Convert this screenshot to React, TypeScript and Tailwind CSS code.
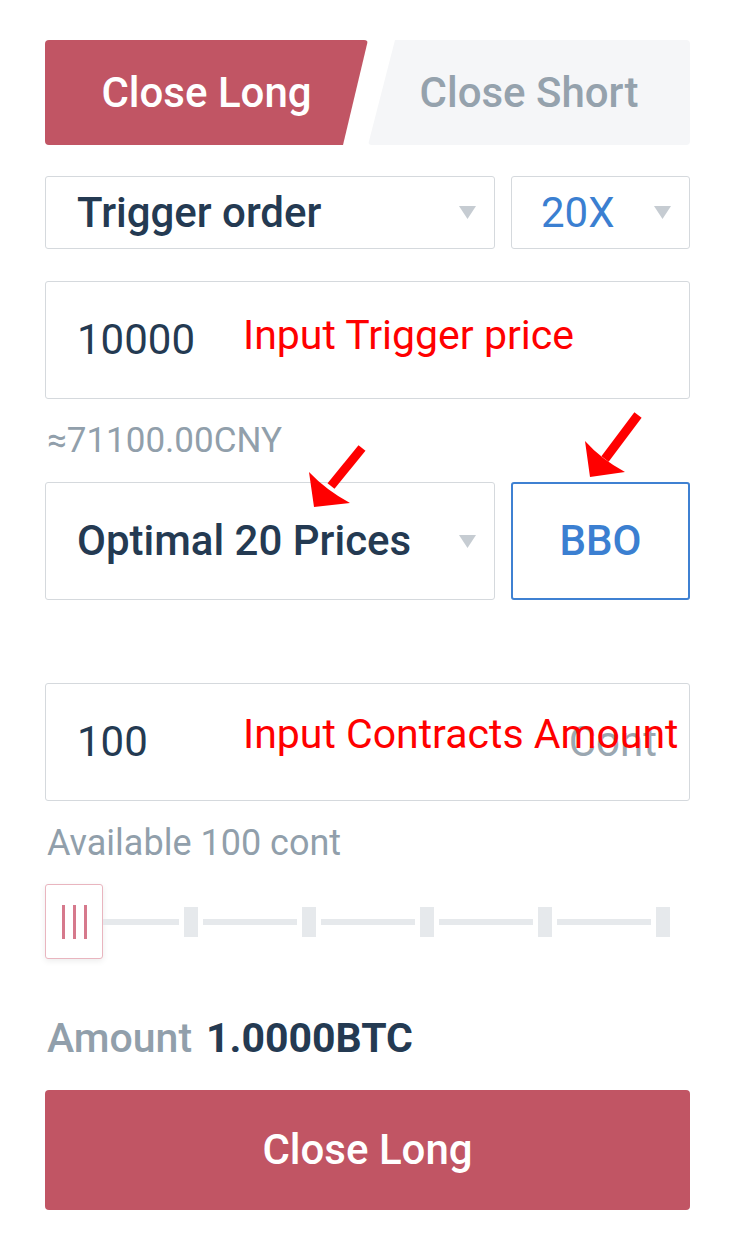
import React from 'react'

const navy = 'text-[#243a52]'

function Caret() {
  return (
    <svg width="17" height="13" viewBox="0 0 17 13" className="shrink-0">
      <polygon points="0,0 17,0 8.5,13" fill="#c6ccd2" />
    </svg>
  )
}

function SliderMark() {
  return <div className="h-[30px] w-[14px] bg-[#e6e9ec]" />
}

function SliderLine({ w }: { w: string }) {
  return <div className={`h-[6px] bg-[#e6e9ec] ${w}`} />
}

export default function App() {
  return (
    <div className="relative min-h-[1253px] w-[733px] bg-white pt-[40px] pr-[43px] pl-[45px] font-['Roboto','Liberation_Sans',sans-serif]">
      {/* tabs */}
      <div className="flex h-[105px]">
        <div className="flex w-[323px] items-center justify-center rounded-[4px] bg-[#c15564] [clip-path:polygon(0_0,100%_0,298px_100%,0_100%)]">
          <span className="text-[42px] leading-[42px] font-medium text-white">Close Long</span>
        </div>
        <div className="flex flex-1 items-center justify-center rounded-[4px] bg-[#f5f6f8] [clip-path:polygon(27px_0,100%_0,100%_100%,0_100%)]">
          <span className="text-[42px] leading-[42px] font-medium text-[#95a2ad]">Close Short</span>
        </div>
      </div>

      {/* order type + leverage */}
      <div className="mt-[31px] flex h-[73px] gap-4">
        <div className="flex w-[450px] items-center justify-between rounded-[3px] border border-[#d5d9dd] pr-[18px] pl-[31px]">
          <span className={`text-[42px] leading-[42px] font-medium ${navy}`}>Trigger order</span>
          <Caret />
        </div>
        <div className="flex flex-1 items-center justify-between rounded-[3px] border border-[#d5d9dd] pr-[18px] pl-[29px]">
          <span className="text-[42px] leading-[42px] text-[#3b7fd1]">20X</span>
          <Caret />
        </div>
      </div>

      {/* trigger price */}
      <div className="relative mt-[32px] flex h-[118px] items-center rounded-[3px] border border-[#d5d9dd] pl-[31px]">
        <span className={`text-[42px] leading-[42px] ${navy}`}>10000</span>
        <span className="absolute top-[33px] left-[197px] text-[41px] leading-[41px] text-[#ff0000]">
          Input Trigger price
        </span>
      </div>
      <div className="mt-[24px] pl-[2px] text-[35px] leading-[36px] text-[#919fab]">≈71100.00CNY</div>

      {/* price type */}
      <div className="mt-[23px] flex h-[118px] gap-4">
        <div className="flex w-[450px] items-center justify-between rounded-[3px] border border-[#d5d9dd] pr-[18px] pl-[31px]">
          <span className={`text-[42px] leading-[42px] font-medium ${navy}`}>Optimal 20 Prices</span>
          <Caret />
        </div>
        <div className="flex flex-1 items-center justify-center rounded-[3px] border-2 border-[#3f81d2]">
          <span className="text-[42px] leading-[42px] font-medium text-[#3b7fd1]">BBO</span>
        </div>
      </div>

      {/* amount */}
      <div className="relative mt-[83px] flex h-[118px] items-center justify-between rounded-[3px] border border-[#d5d9dd] pr-[32px] pl-[31px]">
        <span className={`text-[42px] leading-[42px] ${navy}`}>100</span>
        <span className="text-[42px] leading-[42px] text-[#9aa7b1]">Cont</span>
        <span className="absolute top-[30px] left-[197px] text-[41px] leading-[41px] text-[#ff0000]">
          Input Contracts Amount
        </span>
      </div>
      <div className="mt-[24px] pl-[2px] text-[36px] leading-[36px] text-[#919fab]">Available 100 cont</div>

      {/* slider */}
      <div className="mt-[23px] flex h-[75px] items-center">
        <div className="flex h-[75px] w-[58px] items-center justify-center gap-[8px] rounded-[3px] border border-[#e9b5bf] bg-white shadow-[0_2px_6px_rgba(0,0,0,0.08)]">
          <div className="h-[34px] w-[3px] bg-[#d6798c]" />
          <div className="h-[34px] w-[3px] bg-[#d6798c]" />
          <div className="h-[34px] w-[3px] bg-[#d6798c]" />
        </div>
        <div className="flex items-center gap-[5px]">
          <SliderLine w="w-[76px]" />
          <SliderMark />
          <SliderLine w="w-[94px]" />
          <SliderMark />
          <SliderLine w="w-[94px]" />
          <SliderMark />
          <SliderLine w="w-[94px]" />
          <SliderMark />
          <SliderLine w="w-[94px]" />
          <SliderMark />
        </div>
      </div>

      {/* total */}
      <div className="mt-[58px] flex items-baseline gap-[14px] pl-[2px]">
        <span className="text-[41px] leading-[42px] font-medium text-[#919fab]">Amount</span>
        <span className={`text-[41px] leading-[42px] font-bold ${navy}`}>1.0000BTC</span>
      </div>

      <button className="mt-[31px] flex h-[120px] w-full items-center justify-center rounded-[4px] bg-[#c15564]">
        <span className="text-[42px] leading-[42px] font-medium text-white">Close Long</span>
      </button>

      {/* annotation arrows */}
      <svg className="pointer-events-none absolute top-0 left-0" width="733" height="1253">
        <line x1="331" y1="486" x2="362" y2="448" stroke="#ff0000" strokeWidth="9" />
        <path d="M314 507 L309 472 Q326 490 350 503 Z" fill="#ff0000" />
        <line x1="605" y1="459" x2="638" y2="415" stroke="#ff0000" strokeWidth="9" />
        <path d="M590 477 L585 441 Q601 459 625 472 Z" fill="#ff0000" />
      </svg>
    </div>
  )
}
